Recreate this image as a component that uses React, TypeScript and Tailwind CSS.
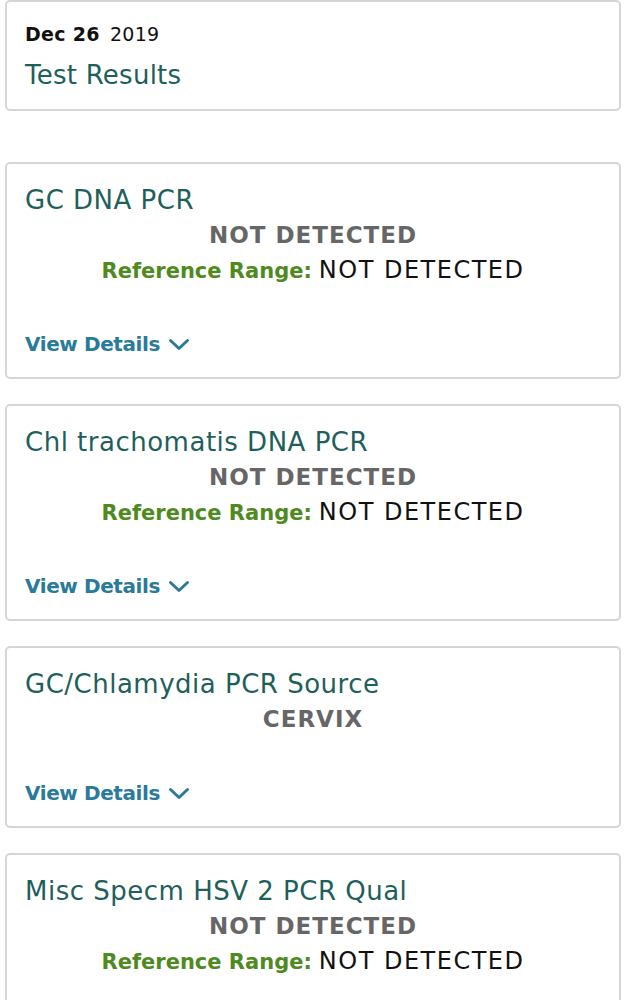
import React from 'react';

interface ResultItem {
  id: number;
  name: string;
  value: string;
  range?: string;
}

const results: ResultItem[] = [
  { id: 1, name: 'GC DNA PCR', value: 'NOT DETECTED', range: 'NOT DETECTED' },
  { id: 2, name: 'Chl trachomatis DNA PCR', value: 'NOT DETECTED', range: 'NOT DETECTED' },
  { id: 3, name: 'GC/Chlamydia PCR Source', value: 'CERVIX' },
  { id: 4, name: 'Misc Specm HSV 2 PCR Qual', value: 'NOT DETECTED', range: 'NOT DETECTED' },
];

const Chevron = () => (
  <svg width="22" height="13" viewBox="0 0 22 13" fill="none" className="ml-[8px]">
    <path d="M2.5 2.5 L11 10.5 L19.5 2.5" stroke="#2a7a99" strokeWidth="3" strokeLinecap="round" strokeLinejoin="round" />
  </svg>
);

const App: React.FC = () => {
  return (
    <div className="min-h-screen bg-white px-[5px] font-['DejaVu_Sans',sans-serif]">
      {/* Header */}
      <div className="w-[616px] h-[111px] rounded-[5px] border-2 border-[#d6d6d6] px-[18px] pt-[19px]">
        <div className="flex items-baseline text-[19px] leading-[26px] tracking-[0.3px] text-[#111]">
          <span className="font-bold">Dec</span>
          <span className="ml-[7px] font-bold">26</span>
          <span className="ml-[10px]">2019</span>
        </div>
        <div className="mt-[12px] text-[26px] leading-[32px] tracking-[0.25px] text-[#1f5f5b]">Test Results</div>
      </div>

      <div className="mt-[51px] flex flex-col gap-[25px]">
        {results.map((item) => (
          <div
            key={item.id}
            className="w-[616px] rounded-[5px] border-2 border-[#d6d6d6] px-[18px] pt-[21px] pb-[20px]"
          >
            <div className="text-[26px] leading-[30px] tracking-[0.5px] text-[#1f5f5b]">{item.name}</div>
            <div className="mt-[5px] text-center text-[23px] leading-[30px] tracking-[1px] font-bold text-[#666]">
              {item.value}
            </div>
            {item.range && (
              <div className="mt-[5px] flex items-baseline justify-center leading-[30px]">
                <span className="text-[21px] font-bold text-[#4f8a1f]">Reference Range:</span>
                <span className="ml-[7px] text-[24px] tracking-[1.5px] text-[#111]">{item.range}</span>
              </div>
            )}
            <div
              className={`${item.range ? 'mt-[45px]' : 'mt-[46px]'} flex items-center text-[20px] leading-[26px] tracking-[-0.4px] font-bold text-[#2a7a99]`}
            >
              View Details
              <Chevron />
            </div>
          </div>
        ))}
      </div>
    </div>
  );
};

export default App;
